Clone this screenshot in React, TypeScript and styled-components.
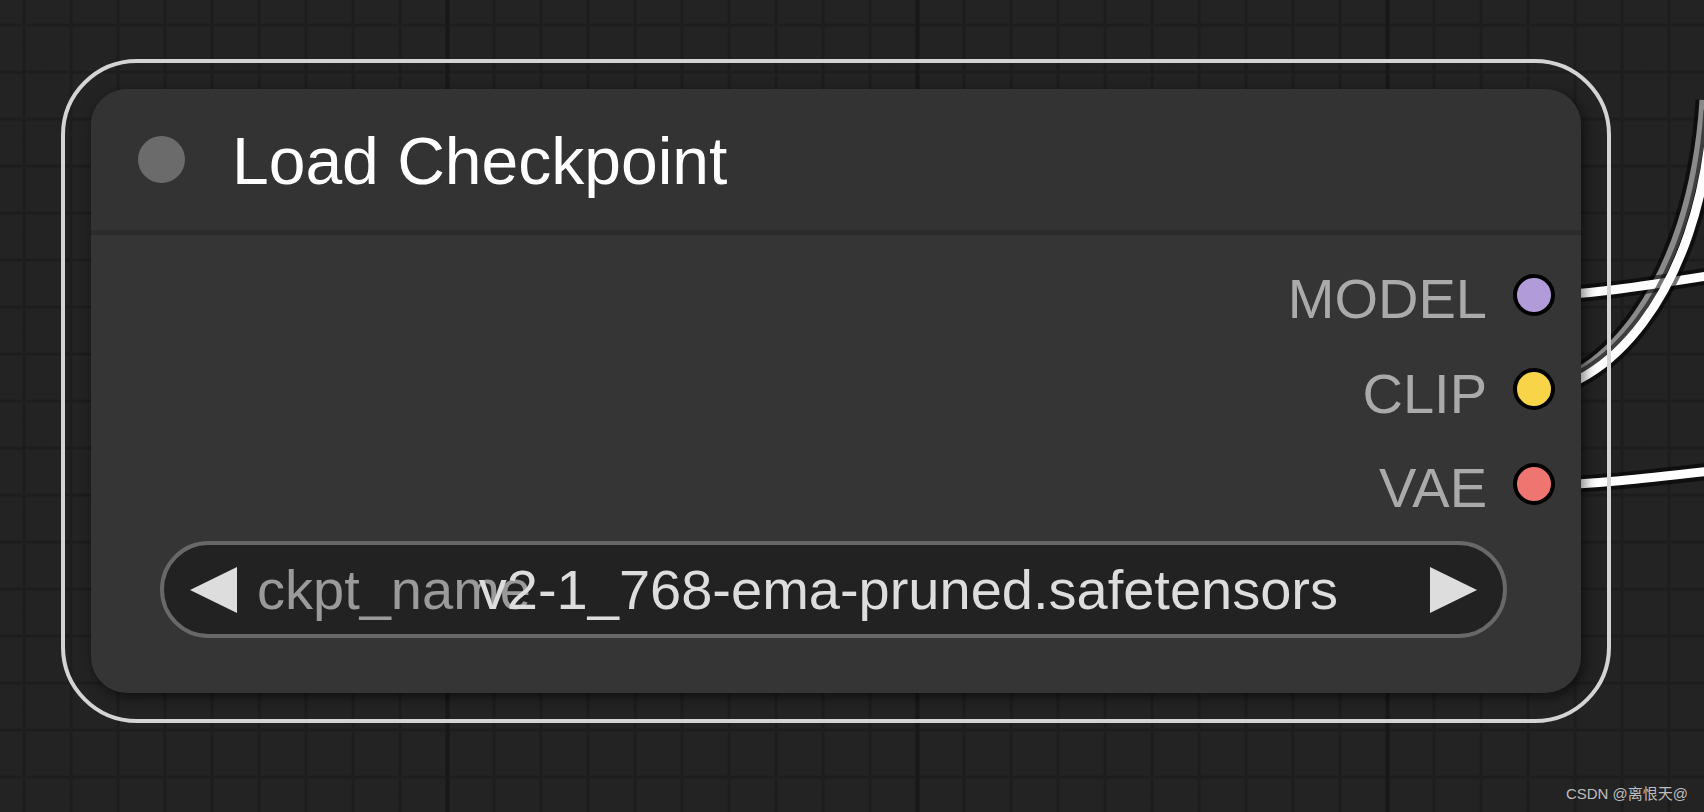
import styled, { createGlobalStyle } from "styled-components";

const GlobalStyle = createGlobalStyle`
    html, body {
        margin: 0;
        padding: 0;
        background: #232323;
        overflow: hidden;
    }
    * { box-sizing: border-box; }
`

const Canvas = styled.div`
    position: relative;
    width: 1704px;
    height: 812px;
    overflow: hidden;
    padding: 59px 0 0 61px;
    font-family: "Liberation Sans", Arial, sans-serif;
    background-color: #232323;
    background-image:
        linear-gradient(to right, transparent 0, #181818 1px, #181818 4px, transparent 5px),
        linear-gradient(to right, transparent 0, #1d1d1d 1px, #1d1d1d 3px, transparent 4px),
        linear-gradient(to bottom, transparent 0, #1d1d1d 1px, #1d1d1d 3px, transparent 4px);
    background-size: 470px 100%, 47px 47px, 47px 47px;
    background-position: 445px 0, 22px 0, 0 23px;
`

const Wires = styled.svg`
    position: absolute;
    left: 0;
    top: 0;
    width: 1704px;
    height: 812px;
    pointer-events: none;
`

const Selection = styled.div`
    position: relative;
    z-index: 1;
    width: 1550px;
    height: 664px;
    border: 4px solid #d4d4d4;
    border-radius: 76px;
    padding: 26px;
`

const Node = styled.div`
    display: flex;
    flex-direction: column;
    width: 100%;
    height: 100%;
    border-radius: 36px;
    background: #353535;
    overflow: hidden;
    box-shadow: 3px 4px 14px rgba(0, 0, 0, 0.55);
`

const TitleBar = styled.div`
    display: flex;
    align-items: center;
    height: 147px;
    padding-left: 47px;
    gap: 47px;
    background: #333333;
    border-bottom: 5px solid #2b2b2b;
`

const TitleDot = styled.div`
    width: 47px;
    height: 47px;
    border-radius: 50%;
    background: #6b6b6b;
`

const Title = styled.div`
    color: #ffffff;
    font-size: 66px;
    line-height: 66px;
    padding-top: 3px;
`

const Body = styled.div`
    display: flex;
    flex-direction: column;
    flex: 1;
    padding: 13px 26px 55px 69px;
`

const SlotRow = styled.div`
    display: flex;
    align-items: center;
    justify-content: flex-end;
    gap: 26px;
    height: 94.5px;
`

const SlotLabel = styled.span`
    color: #aaaaaa;
    font-size: 56px;
    line-height: 56px;
    padding-top: 9px;
`

const SlotDot = styled.div<{ $color: string }>`
    width: 42px;
    height: 42px;
    border-radius: 50%;
    border: 4px solid #000;
    background: ${p => p.$color};
`

const Combo = styled.div`
    display: grid;
    grid-template-columns: auto 1fr auto;
    align-items: center;
    margin-top: 10px;
    margin-right: 48px;
    height: 97px;
    padding: 0 26px;
    border: 4px solid #686868;
    border-radius: 49px;
    background: #222222;
    font-size: 56px;
    line-height: 56px;
`

const Arrow = styled.svg`
    display: block;
    width: 47px;
    height: 46px;
    fill: #dddddd;
`

const ComboLabel = styled.span`
    grid-row: 1;
    grid-column: 2;
    justify-self: start;
    margin-left: 20px;
    color: #9a9a9a;
    white-space: nowrap;
`

const ComboValue = styled.span`
    grid-row: 1;
    grid-column: 2;
    justify-self: end;
    margin-right: 92px;
    color: #dddddd;
    white-space: nowrap;
`

const Watermark = styled.div`
    position: absolute;
    right: 16px;
    bottom: 9px;
    font-family: "Liberation Sans", "Noto Sans CJK SC", sans-serif;
    font-size: 15px;
    color: #bdbdbd;
`

const slots = [
    { name: "MODEL", color: "#b19cd9" },
    { name: "CLIP", color: "#f8d548" },
    { name: "VAE", color: "#ef7571" },
]

const links = [
    { d: "M1534 386 C1598 384, 1692 290, 1704 100", color: "#8a8a8a" },
    { d: "M1534 296 C1590 295, 1650 285, 1720 274", color: "#ffffff" },
    { d: "M1534 391 C1600 392, 1700 300, 1712 110", color: "#ffffff" },
    { d: "M1534 486 C1590 485, 1650 478, 1720 470", color: "#ffffff" },
]

export default function App() {
    return (
        <Canvas>
            <GlobalStyle />
            <Wires viewBox="0 0 1704 812">
                {links.map((l, i) => (
                    <g key={i}>
                        <path d={l.d} stroke="rgba(0,0,0,0.55)" strokeWidth={17} fill="none" />
                        <path d={l.d} stroke={l.color} strokeWidth={9} fill="none" />
                    </g>
                ))}
            </Wires>
            <Selection>
                <Node>
                    <TitleBar>
                        <TitleDot />
                        <Title>Load Checkpoint</Title>
                    </TitleBar>
                    <Body>
                        {slots.map(s => (
                            <SlotRow key={s.name}>
                                <SlotLabel>{s.name}</SlotLabel>
                                <SlotDot $color={s.color} />
                            </SlotRow>
                        ))}
                        <Combo>
                            <Arrow viewBox="0 0 47 46"><polygon points="47,0 47,46 0,23" /></Arrow>
                            <ComboLabel>ckpt_name</ComboLabel>
                            <ComboValue>v2-1_768-ema-pruned.safetensors</ComboValue>
                            <Arrow viewBox="0 0 47 46"><polygon points="0,0 47,23 0,46" /></Arrow>
                        </Combo>
                    </Body>
                </Node>
            </Selection>
            <Watermark>CSDN @离恨天@</Watermark>
        </Canvas>
    )
}
